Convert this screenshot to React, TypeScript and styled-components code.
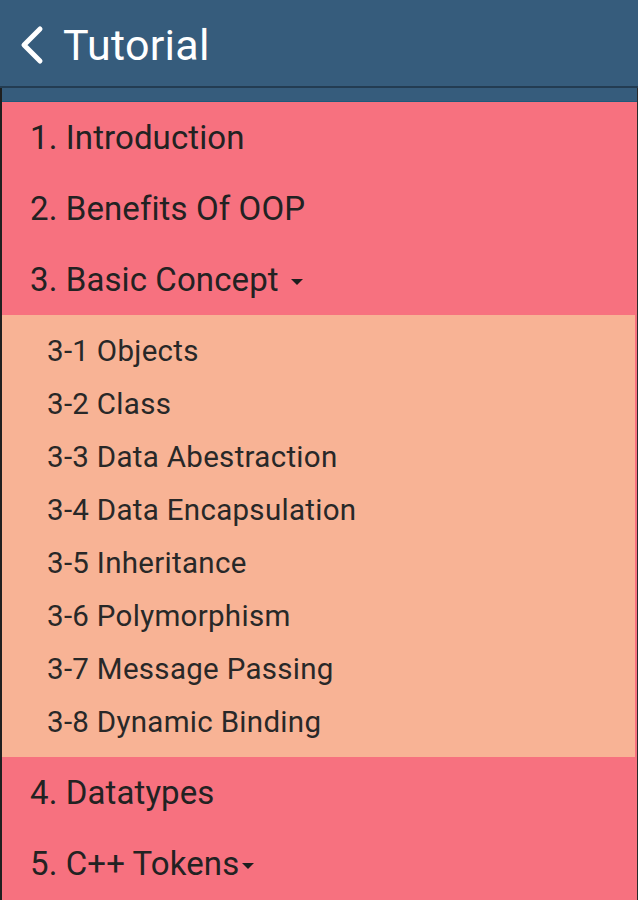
import styled, { createGlobalStyle } from "styled-components";
import { Fragment } from "react";

const GlobalStyle = createGlobalStyle`
    html, body {
        margin: 0;
        padding: 0;
        background: #f7717f;
    }
    body {
        font-family: Roboto, "Noto Sans", sans-serif;
        width: 638px;
        height: 900px;
        overflow: hidden;
    }
`

const Screen = styled.div`
    width: 638px;
    height: 900px;
    display: flex;
    flex-direction: column;
    background: #f7717f;
    overflow: hidden;
`

const TopBar = styled.header`
    height: 88px;
    flex: none;
    display: flex;
    align-items: center;
    gap: 17px;
    padding-left: 16px;
    padding-top: 3px;
    box-sizing: border-box;
    background: #365c7c;
    color: #ffffff;
    border-bottom: 2px solid #233c52;
`

const Title = styled.h1`
    margin: 0;
    font-size: 43px;
    font-weight: 400;
    letter-spacing: 0.3px;
`

const Body = styled.div`
    flex: 1;
    display: flex;
    flex-direction: column;
    border-left: 2px solid #1f1f1f;
    border-right: 1px solid #2a2a2a;
`

const Strip = styled.div`
    height: 13px;
    background: #365c7c;
    border-bottom: 1px solid #1f5a7a;
`

const Chapter = styled.div`
    height: 71px;
    display: flex;
    align-items: center;
    padding-left: 28px;
    box-sizing: border-box;
    font-size: 33px;
    color: #222222;
    letter-spacing: 0.1px;
`

const Caret = styled.span<{ $gap: number }>`
    display: inline-block;
    margin-left: ${p => p.$gap}px;
    width: 0;
    height: 0;
    border-left: 6px solid transparent;
    border-right: 6px solid transparent;
    border-top: 6px solid #1e1e1e;
    transform: translateY(2px);
`

const SubList = styled.div`
    background: #f8b395;
    padding: 9px 0 9px;
    margin-right: 2px;
`

const Section = styled.div`
    height: 53px;
    display: flex;
    align-items: center;
    padding-left: 45px;
    padding-top: 1px;
    box-sizing: border-box;
    font-size: 29.5px;
    color: #282828;
    letter-spacing: 0.3px;
`

interface ChapterData {
    title: string
    caretGap?: number
    sections?: string[]
}

const chapters: ChapterData[] = [
    { title: "1. Introduction" },
    { title: "2. Benefits Of OOP" },
    {
        title: "3. Basic Concept",
        caretGap: 12,
        sections: [
            "3-1 Objects",
            "3-2 Class",
            "3-3 Data Abestraction",
            "3-4 Data Encapsulation",
            "3-5 Inheritance",
            "3-6 Polymorphism",
            "3-7 Message Passing",
            "3-8 Dynamic Binding",
        ],
    },
    { title: "4. Datatypes" },
    { title: "5. C++ Tokens", caretGap: 3 },
]

const BackIcon = () => (
    <svg width="30" height="40" viewBox="0 0 30 40">
        <path d="M24 4 L8 20 L24 36" fill="none" stroke="#ffffff" strokeWidth="5" strokeLinecap="round" strokeLinejoin="round" />
    </svg>
)

const App = (): JSX.Element => {
    return (
        <Screen>
            <GlobalStyle />
            <TopBar>
                <BackIcon />
                <Title>Tutorial</Title>
            </TopBar>
            <Body>
                <Strip />
                {chapters.map((ch, i) => (
                    <Fragment key={i}>
                        <Chapter>
                            {ch.title}
                            {ch.caretGap !== undefined && <Caret $gap={ch.caretGap} />}
                        </Chapter>
                        {ch.sections && (
                            <SubList>
                                {ch.sections.map(s => (
                                    <Section key={s}>{s}</Section>
                                ))}
                            </SubList>
                        )}
                    </Fragment>
                ))}
            </Body>
        </Screen>
    )
}

export default App
